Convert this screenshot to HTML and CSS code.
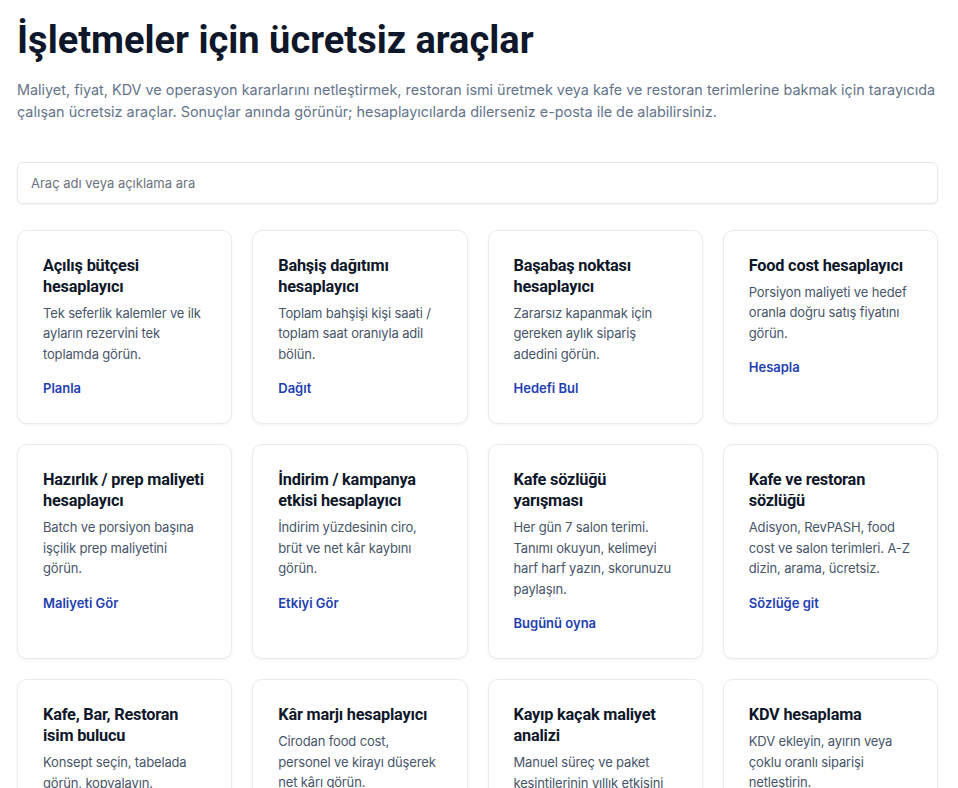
FILE: index.html
```html
<!DOCTYPE html>
<html lang="tr">
<head>
<meta charset="utf-8">
<title>İşletmeler için ücretsiz araçlar</title>
<link rel="stylesheet" href="styles.css">
</head>
<body>
<main class="page">
  <h1 class="title">İşletmeler için ücretsiz araçlar</h1>
  <p class="lead">Maliyet, fiyat, KDV ve operasyon kararlarını netleştirmek, restoran ismi üretmek veya kafe ve restoran terimlerine bakmak için tarayıcıda çalışan ücretsiz araçlar. Sonuçlar anında görünür; hesaplayıcılarda dilerseniz e-posta ile de alabilirsiniz.</p>
  <input class="search" type="text" placeholder="Araç adı veya açıklama ara">
  <section class="grid">
    <a class="card" href="#">
      <h2 class="card-title">Açılış bütçesi hesaplayıcı</h2>
      <p class="card-desc">Tek seferlik kalemler ve ilk ayların rezervini tek toplamda görün.</p>
      <span class="card-link">Planla</span>
    </a>
    <a class="card" href="#">
      <h2 class="card-title">Bahşiş dağıtımı hesaplayıcı</h2>
      <p class="card-desc">Toplam bahşişi kişi saati / toplam saat oranıyla adil bölün.</p>
      <span class="card-link">Dağıt</span>
    </a>
    <a class="card" href="#">
      <h2 class="card-title">Başabaş noktası hesaplayıcı</h2>
      <p class="card-desc">Zararsız kapanmak için gereken aylık sipariş adedini görün.</p>
      <span class="card-link">Hedefi Bul</span>
    </a>
    <a class="card" href="#">
      <h2 class="card-title">Food cost hesaplayıcı</h2>
      <p class="card-desc">Porsiyon maliyeti ve hedef oranla doğru satış fiyatını görün.</p>
      <span class="card-link">Hesapla</span>
    </a>
    <a class="card" href="#">
      <h2 class="card-title">Hazırlık / prep maliyeti hesaplayıcı</h2>
      <p class="card-desc">Batch ve porsiyon başına işçilik prep maliyetini görün.</p>
      <span class="card-link">Maliyeti Gör</span>
    </a>
    <a class="card" href="#">
      <h2 class="card-title">İndirim / kampanya etkisi hesaplayıcı</h2>
      <p class="card-desc">İndirim yüzdesinin ciro, brüt ve net kâr kaybını görün.</p>
      <span class="card-link">Etkiyi Gör</span>
    </a>
    <a class="card" href="#">
      <h2 class="card-title">Kafe sözlüğü yarışması</h2>
      <p class="card-desc">Her gün 7 salon terimi. Tanımı okuyun, kelimeyi harf harf yazın, skorunuzu paylaşın.</p>
      <span class="card-link">Bugünü oyna</span>
    </a>
    <a class="card" href="#">
      <h2 class="card-title">Kafe ve restoran sözlüğü</h2>
      <p class="card-desc">Adisyon, RevPASH, food cost ve salon terimleri. <span class="nowrap">A-Z</span> dizin, arama, ücretsiz.</p>
      <span class="card-link">Sözlüğe git</span>
    </a>
    <a class="card" href="#">
      <h2 class="card-title">Kafe, Bar, Restoran isim bulucu</h2>
      <p class="card-desc">Konsept seçin, tabelada görün, kopyalayın.</p>
      <span class="card-link">İsim Bul</span>
    </a>
    <a class="card" href="#">
      <h2 class="card-title">Kâr marjı hesaplayıcı</h2>
      <p class="card-desc">Cirodan food cost, personel ve kirayı düşerek net kârı görün.</p>
      <span class="card-link">Hesapla</span>
    </a>
    <a class="card" href="#">
      <h2 class="card-title">Kayıp kaçak maliyet analizi</h2>
      <p class="card-desc">Manuel süreç ve paket kesintilerinin yıllık etkisini görün.</p>
      <span class="card-link">Analiz Et</span>
    </a>
    <a class="card" href="#">
      <h2 class="card-title">KDV hesaplama</h2>
      <p class="card-desc">KDV ekleyin, ayırın veya çoklu oranlı siparişi netleştirin.</p>
      <span class="card-link">Hesapla</span>
    </a>
  </section>
</main>
</body>
</html>
```

FILE: styles.css
```css
* { box-sizing: border-box; }

html, body {
  margin: 0;
  padding: 0;
  background: #ffffff;
}

body {
  font-family: Inter, "Noto Sans", "Liberation Sans", sans-serif;
  color: #0f172a;
}

.page {
  padding: 16px 20px 40px 17px;
}

.title {
  margin: 0;
  font-family: Roboto, "Noto Sans", sans-serif;
  font-weight: 700;
  font-size: 38px;
  line-height: 48px;
  letter-spacing: 0;
  color: #0f172a;
}

.lead {
  margin: 15px 0 0;
  font-size: 14.4px;
  line-height: 22.4px;
  color: #64748b;
}

.search {
  display: block;
  width: 100%;
  height: 42px;
  margin-top: 38px;
  padding: 0 13px;
  border: 1px solid #e5e7eb;
  border-radius: 6px;
  box-shadow: 0 1px 2px rgba(15, 23, 42, 0.06);
  font-family: Inter, "Noto Sans", sans-serif;
  font-size: 13px;
  color: #0f172a;
  background: #fff;
  outline: none;
}

.search::placeholder {
  color: #6b7280;
}

.grid {
  margin-top: 26px;
  display: grid;
  grid-template-columns: repeat(4, 1fr);
  gap: 20px;
}

.card {
  display: flex;
  flex-direction: column;
  align-items: flex-start;
  padding: 24px 25px 25px;
  border: 1px solid #e8ebf2;
  border-radius: 10px;
  background: #fff;
  box-shadow: 0 1px 3px rgba(15, 23, 42, 0.06);
  text-decoration: none;
}

.card-title {
  margin: 0;
  font-family: Roboto, "Noto Sans", sans-serif;
  font-weight: 700;
  font-size: 16.3px;
  line-height: 21px;
  letter-spacing: -0.2px;
  color: #0f172a;
}

.card-desc {
  margin: 6px 0 0;
  font-size: 13px;
  line-height: 20.5px;
  letter-spacing: -0.15px;
  color: #475569;
}

.nowrap {
  white-space: nowrap;
}

.card-link {
  margin-top: 14px;
  font-size: 13px;
  line-height: 20px;
  font-weight: 600;
  color: #1e40af;
}
```
